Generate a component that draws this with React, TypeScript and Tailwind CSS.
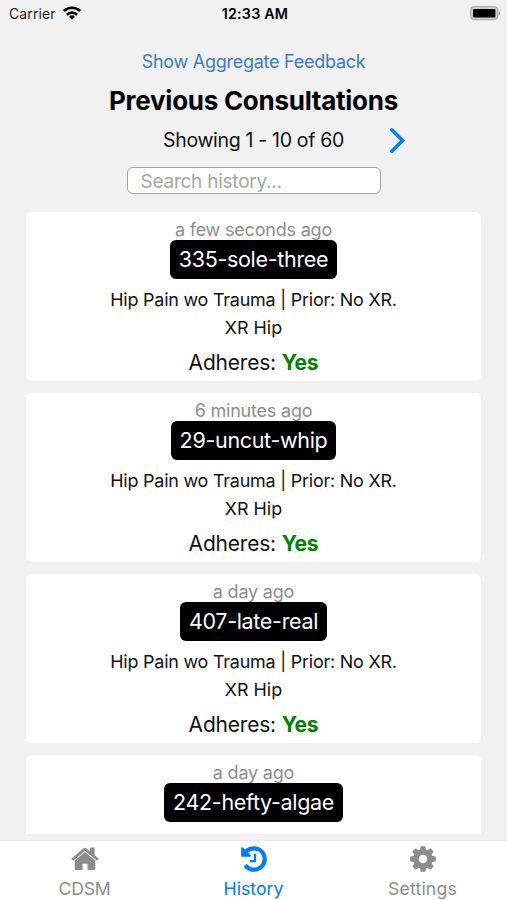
import { ReactElement } from "react";

interface Consultation {
  time: string;
  name: string;
  details?: {
    indication: string;
    order: string;
    adheres: string;
  };
}

interface IconProps {
  path: string;
}

const hipPain = {
  indication: "Hip Pain wo Trauma | Prior: No XR.",
  order: "XR Hip",
  adheres: "Yes",
};

const consultations: Consultation[] = [
  { time: "a few seconds ago", name: "335-sole-three", details: hipPain },
  { time: "6 minutes ago", name: "29-uncut-whip", details: hipPain },
  { time: "a day ago", name: "407-late-real", details: hipPain },
  { time: "a day ago", name: "242-hefty-algae" },
];

const historyPath =
  "M1664 896q0 156-61 298t-164 245-245 164-298 61q-172 0-327-72.5t-264-204.5q-7-10-6.5-22.5t8.5-20.5l137-138q10-9 25-9 16 2 23 12 73 95 179 147t225 52q104 0 198.5-40.5t163.5-109.5 109.5-163.5 40.5-198.5-40.5-198.5-109.5-163.5-163.5-109.5-198.5-40.5q-98 0-188 35.5t-160 101.5l137 138q31 30 14 69-17 40-59 40h-448q-26 0-45-19t-19-45v-448q0-42 40-59 39-17 69 14l130 129q107-101 244.5-156.5t284.5-55.5q156 0 298 61t245 164 164 245 61 298zm-640-288v448q0 14-9 23t-23 9h-320q-14 0-23-9t-9-23v-64q0-14 9-23t23-9h224v-352q0-14 9-23t23-9h64q14 0 23 9t9 23z";
const cogPath =
  "M1152 896q0-106-75-181t-181-75-181 75-75 181 75 181 181 75 181-75 75-181zm512-109v222q0 12-8 23t-20 13l-185 28q-19 54-39 91 35 50 107 138 10 12 10 25t-9 23q-27 37-99 108t-94 71q-12 0-26-9l-138-108q-44 23-91 38-16 136-29 186-7 28-36 28h-222q-14 0-24.5-8.5t-11.5-21.5l-28-184q-49-16-90-37l-141 107q-10 9-25 9-14 0-25-11-126-114-165-168-7-10-7-23 0-12 8-23 15-21 51-66.5t54-70.5q-27-50-41-99l-183-27q-13-2-21-12.5t-8-23.5v-222q0-12 8-23t19-13l186-28q14-46 39-92-40-57-107-138-10-12-10-24 0-10 9-23 26-36 98.5-107.5t94.5-71.5q13 0 26 10l138 107q44-23 91-38 16-136 29-186 7-28 36-28h222q14 0 24.5 8.5t11.5 21.5l28 184q49 16 90 37l142-107q9-9 24-9 13 0 25 10 129 119 165 170 7 8 7 22 0 12-8 23-15 21-51 66.5t-54 70.5q26 50 41 98l183 28q13 2 21 12.5t8 23.5z";

function TabIcon({ path }: IconProps): ReactElement {
  return (
    <svg viewBox="0 0 1792 1792" className="h-[30px] w-[30px]" fill="currentColor">
      <path d={path} />
    </svg>
  );
}

function HomeIcon(): ReactElement {
  return (
    <svg viewBox="0 0 30 30" className="h-[30px] w-[30px]" fill="currentColor">
      {/* roof and chimney */}
      <path d="M15 3.8q.8 0 1.4.5l3.6 3V4.2q0-.7.7-.7h3.2q.7 0 .7.7v7l3.8 3.2q.4.4.1.8l-1 1.1q-.4.4-.8.1L15 6.9 3.3 16.4q-.4.3-.8-.1l-1-1.1q-.3-.4.1-.8L13.6 4.3q.6-.5 1.4-.5z" />
      <path d="M15 8.1l10.3 8.4v8.6q0 1-1 1h-6.8v-6.4h-5v6.4H5.7q-1 0-1-1v-8.6z" />
    </svg>
  );
}

function StatusBar(): ReactElement {
  return (
    <div className="grid h-7 shrink-0 grid-cols-3 items-center pl-[9px] pr-[6px] text-[14px] text-[#222]">
      <div className="-mt-px flex items-center gap-[7px]">
        <span className="tracking-[0.1px]">Carrier</span>
        <svg viewBox="0 0 18 14" className="-mt-[2px] h-[14px] w-[18px]" fill="none" stroke="#000" strokeWidth="2.7">
          <path d="M0.9 5.1a11.5 11.5 0 0 1 16.2 0" />
          <path d="M3.8 8.7a7.4 7.4 0 0 1 10.4 0" />
          <path d="M9 13.8l-2.9-3a4.1 4.1 0 0 1 5.8 0z" fill="#000" stroke="none" />
        </svg>
      </div>
      <span className="text-center text-[14.3px] font-semibold tracking-[0.2px] text-black">12:33 AM</span>
      <svg viewBox="0 0 31 15" className="-mt-[2px] h-[15px] w-[31px] justify-self-end">
        <rect x="0.7" y="0.7" width="27" height="13" rx="3.6" fill="#d0d0d0" stroke="#b0b0b0" strokeWidth="1.3" />
        <rect x="3" y="3" width="22.4" height="8.6" rx="1" fill="#000" />
        <path d="M28.6 4.8a2.7 2.7 0 0 1 0 5z" fill="#a9a9a9" />
      </svg>
    </div>
  );
}

function Card({ item }: { item: Consultation }): ReactElement {
  return (
    <div
      className={`flex shrink-0 flex-col items-center bg-white pt-[6px] ${
        item.details ? "h-[169px] rounded-md" : "h-[79px] rounded-t-md"
      }`}
    >
      <p className="h-[22px] text-[18px] leading-[23px] tracking-[-0.2px] text-[#8e8e8e]">{item.time}</p>
      <p className="h-[39px] rounded-md bg-black px-[9px] text-[21.5px] leading-[39px] tracking-[-0.32px] text-white">
        {item.name}
      </p>
      {item.details && (
        <>
          <p className="mt-[7px] h-7 text-[17.9px] leading-7 tracking-[-0.2px] text-[#111]">
            {item.details.indication}
          </p>
          <p className="h-7 text-[17.9px] leading-7 text-[#111]">{item.details.order}</p>
          <p className="mt-[5px] text-[21px] leading-[31px] tracking-[-0.2px] text-[#111]">
            Adheres: <span className="font-bold text-[#008000]">{item.details.adheres}</span>
          </p>
        </>
      )}
    </div>
  );
}

export default function App(): ReactElement {
  return (
    <div className="flex h-[900px] w-[507px] flex-col overflow-hidden bg-[#f1f1f1] font-['Inter','Liberation_Sans',sans-serif]">
      <StatusBar />
      <div className="flex shrink-0 flex-col items-center">
        <button className="mt-[21px] text-[18px] leading-[26px] tracking-[-0.26px] text-[#3d7cb8]">
          Show Aggregate Feedback
        </button>
        <h1 className="mt-[9px] text-[26px] font-bold leading-[34px] tracking-[-0.27px] text-black">
          Previous Consultations
        </h1>
        <div className="grid h-[42px] w-full grid-cols-[1fr_auto_1fr] items-center">
          <span />
          <p className="pt-[3px] text-[19.5px] tracking-[-0.32px] text-[#111]">Showing 1 - 10 of 60</p>
          <svg viewBox="0 0 18 28" className="ml-[45px] h-7 w-[18px]" fill="none" stroke="#0a7cff" strokeWidth="3.6">
            <path d="M2.8 4.8L13.6 15.5 2.8 26.2" strokeLinecap="round" />
          </svg>
        </div>
        <input
          placeholder="Search history..."
          className="mt-[7px] h-[27px] w-[254px] rounded-md border-[1.5px] border-[#a3a3a3] bg-white px-[13px] pt-[3px] text-[19px] tracking-[-0.24px] placeholder:text-[#a6a6a6]"
        />
      </div>
      <div className="mx-[26px] mt-[18px] flex min-h-0 flex-1 flex-col gap-3">
        {consultations.map((item) => (
          <Card key={item.name} item={item} />
        ))}
      </div>
      <nav className="grid h-[60px] shrink-0 grid-cols-3 border-t border-[#e9e9e9] bg-white text-[17.7px] text-[#8c8c8c]">
        <div className="flex flex-col items-center pt-[3px]">
          <HomeIcon />
          <span className="leading-[30px] tracking-[-0.3px]">CDSM</span>
        </div>
        <div className="flex flex-col items-center pt-[3px] text-[#007aff]">
          <TabIcon path={historyPath} />
          <span className="leading-[30px]">History</span>
        </div>
        <div className="flex flex-col items-center pt-[3px]">
          <TabIcon path={cogPath} />
          <span className="leading-[30px] tracking-[0.15px]">Settings</span>
        </div>
      </nav>
    </div>
  );
}
